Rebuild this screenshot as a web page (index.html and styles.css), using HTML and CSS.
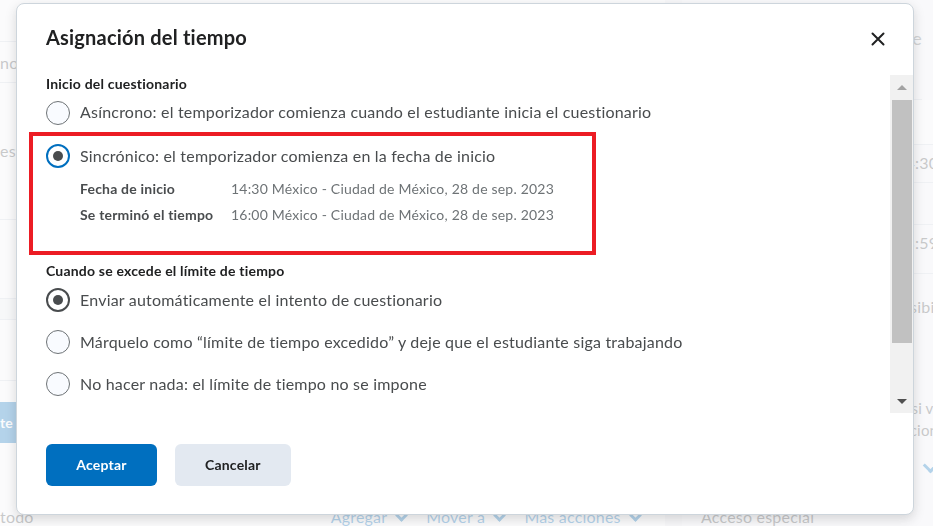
FILE: index.html
```html
<!DOCTYPE html>
<html lang="es">
<head>
    <meta charset="utf-8">
    <title>Asignación del tiempo</title>
    <link rel="stylesheet" href="styles.css">
</head>
<body>
    <div class="page">
        <div class="main">
            <div class="row h42"></div>
            <div class="row h41"><span class="bg-text">no</span></div>
            <div class="row h137"><span class="bg-text">est</span></div>
            <div class="row h79"></div>
            <div class="row h21 band"></div>
            <div class="row h61"></div>
            <div class="gap21"></div>
            <div class="bg-button">te</div>
            <div class="gap62"></div>
            <div class="toolbar">
                <span class="bg-text">todo</span>
                <div class="actions">
                    <span>Agregar <i class="chev"></i></span>
                    <span>Mover a <i class="chev"></i></span>
                    <span>Más acciones <i class="chev"></i></span>
                </div>
            </div>
        </div>
        <div class="sep"></div>
        <div class="side">
            <div class="srow h100"><span class="side-text top">Fechas de disponibilidad y hora de inicio de clase</span></div>
            <div class="srow h45"></div>
            <div class="srow h38"><span class="side-text time">14:30</span></div>
            <div class="srow h42"></div>
            <div class="srow h49"><span class="side-text time">23:59</span></div>
            <div class="srow last">
                <span class="side-text t1">Visibilidad</span>
                <span class="side-text t2">Aparece si ve</span>
                <span class="side-text t3">Condiciones</span>
                <i class="chev big"></i>
                <span class="side-text t4">Acceso especial</span>
            </div>
        </div>
    </div>

    <div class="backdrop"></div>

    <div class="dialog">
        <div class="dialog-header">
            <h2>Asignación del tiempo</h2>
            <button class="close" aria-label="Cerrar">
                <svg width="14" height="14" viewBox="0 0 14 14">
                    <path d="M1.5 1.5 L12.5 12.5 M12.5 1.5 L1.5 12.5" stroke="#202122" stroke-width="2" stroke-linecap="round"/>
                </svg>
            </button>
        </div>

        <div class="dialog-body">
            <div class="content">
                <div class="section-label">Inicio del cuestionario</div>
                <div class="option first">
                    <span class="radio"></span>
                    <span class="opt-text">Asíncrono: el temporizador comienza cuando el estudiante inicia el cuestionario</span>
                </div>
                <div class="highlight">
                    <div class="option">
                        <span class="radio checked focus"></span>
                        <span class="opt-text">Sincrónico: el temporizador comienza en la fecha de inicio</span>
                    </div>
                    <div class="details">
                        <span class="d-label">Fecha de inicio</span>
                        <span class="d-value">14:30 México - Ciudad de México, 28 de sep. 2023</span>
                        <span class="d-label">Se terminó el tiempo</span>
                        <span class="d-value">16:00 México - Ciudad de México, 28 de sep. 2023</span>
                    </div>
                </div>

                <div class="section-label second">Cuando se excede el límite de tiempo</div>
                <div class="options">
                    <div class="option">
                        <span class="radio checked"></span>
                        <span class="opt-text">Enviar automáticamente el intento de cuestionario</span>
                    </div>
                    <div class="option">
                        <span class="radio"></span>
                        <span class="opt-text">Márquelo como “límite de tiempo excedido” y deje que el estudiante siga trabajando</span>
                    </div>
                    <div class="option">
                        <span class="radio"></span>
                        <span class="opt-text">No hacer nada: el límite de tiempo no se impone</span>
                    </div>
                </div>
            </div>
            <div class="scrollbar">
                <div class="sb-btn"><i class="arrow-up"></i></div>
                <div class="sb-thumb"></div>
                <div class="sb-rest"></div>
                <div class="sb-btn"><i class="arrow-down"></i></div>
            </div>
        </div>

        <div class="dialog-footer">
            <button class="btn primary">Aceptar</button>
            <button class="btn">Cancelar</button>
        </div>
    </div>
</body>
</html>
```

FILE: styles.css
```css
* {
    box-sizing: border-box;
}

body {
    margin: 0;
    font-family: Lato, 'Noto Sans', sans-serif;
    letter-spacing: 0.2px;
    background: #fff;
    color: #494c4e;
    overflow: hidden;
}

/* page behind the dialog */
.page {
    display: grid;
    grid-template-columns: 665px 17px 1fr;
    height: 526px;
    overflow: hidden;
}

.main {
    display: flex;
    flex-direction: column;
}

.row {
    border-bottom: 1px solid #d3d9e3;
    display: flex;
    align-items: center;
    font-size: 16px;
}

.h42 { height: 42px; }
.h41 { height: 41px; }
.h137 { height: 137px; align-items: flex-start; padding-top: 58px; }
.h79 { height: 79px; }
.h21 { height: 21px; }
.h61 { height: 61px; }
.band { background: #f1f3f5; }
.gap21 { height: 21px; }
.gap62 { height: 62px; }

.bg-text {
    font-size: 16px;
    color: #494c4e;
}

.bg-button {
    width: 140px;
    height: 41px;
    background: #006fbf;
    color: #fff;
    font-weight: 700;
    font-size: 14px;
    line-height: 41px;
    border-radius: 0 6px 6px 0;
}

.toolbar {
    display: flex;
    justify-content: space-between;
    align-items: center;
    height: 22px;
    padding-right: 25px;
}

.actions {
    display: flex;
    gap: 20px;
    color: #006fbf;
    font-size: 16px;
}

.chev {
    display: inline-block;
    width: 9px;
    height: 9px;
    border-right: 3px solid #006fbf;
    border-bottom: 3px solid #006fbf;
    transform: translateY(-3px) rotate(45deg);
    margin-left: 6px;
}

.sep {
    background: #eef0f3;
}

.side {
    background: #f6f7f9;
    display: flex;
    flex-direction: column;
}

.srow {
    border-bottom: 1px solid #d3d9e3;
    font-size: 16px;
}

.h100 {
    height: 100px;
    width: 240px;
    display: flex;
    justify-content: flex-end;
    align-items: flex-start;
}
.h45 { height: 45px; background: #fff; }
.h38 { height: 38px; }
.h49 { height: 49px; }

.side-text {
    display: block;
    white-space: nowrap;
    line-height: 20px;
}

.top {
    padding-top: 28px;
    font-size: 18px;
    color: #6e7376;
}

.time {
    padding: 8px 0 0 214px;
}

.last {
    flex: 1;
    border-bottom: none;
    display: flex;
    flex-direction: column;
    align-items: flex-start;
}

.t1 { padding: 23px 0 0 213px; }
.t2 { padding: 81px 0 0 170px; font-size: 15px; }
.t3 { padding: 2px 0 0 188px; font-size: 15px; }

.chev.big {
    display: block;
    margin: 20px 0 0 243px;
    width: 11px;
    height: 11px;
    transform: rotate(45deg);
}

.t4 {
    padding: 36px 0 0 19px;
}

.backdrop {
    position: fixed;
    inset: 0;
    background: rgba(249, 250, 251, 0.72);
}

/* dialog */
.dialog {
    position: fixed;
    left: 16px;
    top: 3px;
    width: 898px;
    height: 512px;
    background: #fff;
    border: 1px solid #cdd5dc;
    border-radius: 8px;
    box-shadow: 0 4px 12px rgba(0, 0, 0, 0.15);
    display: flex;
    flex-direction: column;
    overflow: hidden;
}

.dialog-header {
    height: 71px;
    display: flex;
    justify-content: space-between;
    align-items: flex-start;
    padding: 21px 23px 0 29px;
}

.dialog-header h2 {
    margin: 0;
    font-size: 20px;
    line-height: 24px;
    font-weight: 700;
    color: #202122;
}

.close {
    width: 24px;
    height: 24px;
    margin-top: 2px;
    padding: 0;
    border: none;
    background: none;
    display: flex;
    align-items: center;
    justify-content: center;
}

.dialog-body {
    height: 338px;
    display: flex;
}

.content {
    flex: 1;
    padding-left: 29px;
    overflow: hidden;
}

.section-label {
    font-size: 14px;
    font-weight: 700;
    line-height: 18px;
    color: #202122;
}

.section-label.second {
    margin-top: 7px;
}

.option {
    height: 40px;
    display: flex;
    align-items: center;
    gap: 10px;
    font-size: 16px;
    color: #494c4e;
    white-space: nowrap;
}

.opt-text {
    padding-bottom: 2px;
}

.option.first {
    height: 39px;
}

.options {
    display: flex;
    flex-direction: column;
    gap: 2px;
}

.radio {
    width: 24px;
    height: 24px;
    flex: none;
    border-radius: 50%;
    border: 1px solid #6e7376;
    background: #f9fbff;
    display: flex;
    align-items: center;
    justify-content: center;
}

.radio.checked {
    border: 2px solid #494c4e;
    background: #fff;
}

.radio.checked::after {
    content: '';
    width: 10px;
    height: 10px;
    border-radius: 50%;
    background: #494c4e;
}

.radio.focus {
    border-color: #006fbf;
}

.highlight {
    width: 567px;
    margin-left: -17px;
    border: 4px solid #ec1c24;
    padding: 0 0 24px 13px;
}

.details {
    display: grid;
    grid-template-columns: 151px auto;
    grid-auto-rows: 26px;
    align-items: center;
    margin-top: -1px;
    padding-left: 34px;
    font-size: 14px;
}

.d-label {
    font-weight: 700;
    color: #494c4e;
}

.d-value {
    color: #6e7376;
}

.scrollbar {
    width: 23px;
    background: #f1f1f1;
    display: flex;
    flex-direction: column;
}

.sb-btn {
    height: 24px;
    display: flex;
    align-items: center;
    justify-content: center;
}

.arrow-up {
    border-left: 5px solid transparent;
    border-right: 5px solid transparent;
    border-bottom: 5px solid #a3a3a3;
}

.arrow-down {
    border-left: 5px solid transparent;
    border-right: 5px solid transparent;
    border-top: 5px solid #505050;
}

.sb-thumb {
    height: 243px;
    margin: 1px 1px 0 2px;
    background: #c1c1c1;
}

.sb-rest {
    flex: 1;
}

.dialog-footer {
    flex: 1;
    display: flex;
    gap: 18px;
    padding: 31px 0 0 29px;
    align-items: flex-start;
}

.btn {
    height: 42px;
    padding: 0 30px 2px;
    border: none;
    border-radius: 6px;
    font-family: Lato, 'Noto Sans', sans-serif;
    font-size: 14px;
    font-weight: 700;
    letter-spacing: 0.2px;
    background: #e3e9f1;
    color: #202122;
}

.btn.primary {
    min-width: 111px;
    background: #006fbf;
    color: #fff;
}
```
